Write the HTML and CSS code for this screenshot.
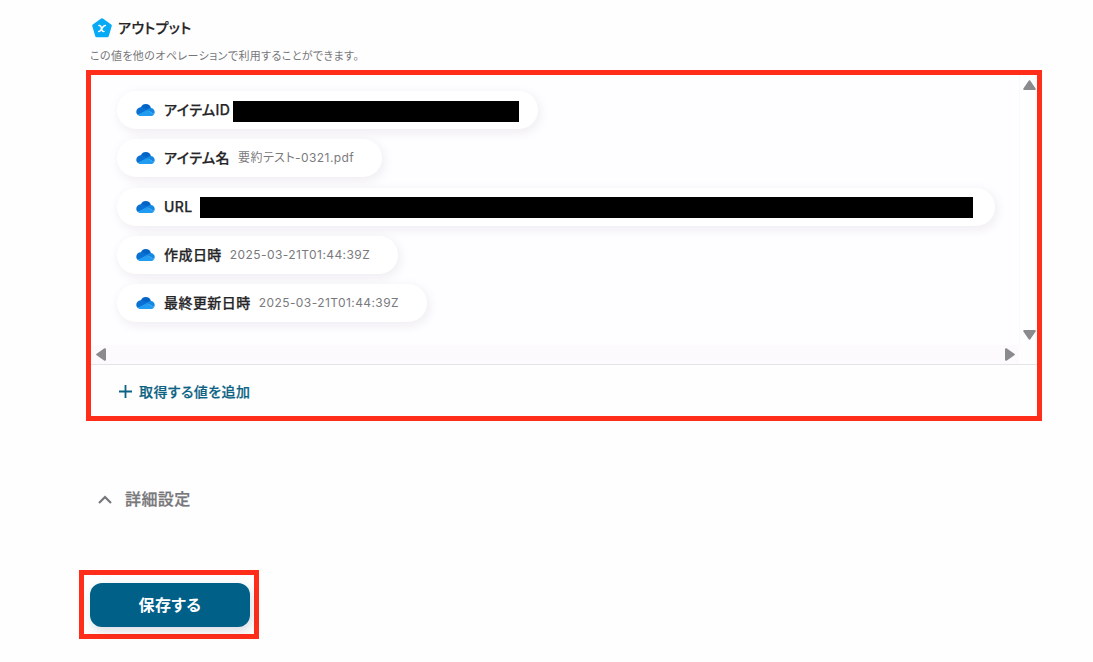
FILE: index.html
```html
<!DOCTYPE html>
<html lang="ja">
<head>
<meta charset="utf-8">
<title>アウトプット</title>
<link rel="stylesheet" href="styles.css">
</head>
<body>
<svg width="0" height="0" class="defs">
  <symbol id="cloud" viewBox="0 0 20 14">
    <path fill="#0364c8" d="M5 4.600C6 1.800 8 .7 10.200 .7c2.900 0 4.900 1.700 5.500 4.200L11 8.500 4 6z"/>
    <path fill="#0a70d4" d="M4.800 4.200c2-.3 3.600.5 5.300 1.600l3 2L2 12.200C.8 11.300.3 10.200.3 8.900c0-2.600 2-4.500 4.500-4.700z"/>
    <path fill="#1488e0" d="M11 7c1.200-1.200 2.700-2.300 4.500-2.200 2.400.1 4.200 2 4.200 4.300 0 .8-.2 1.500-.5 2z"/>
    <path fill="#229cf0" d="M1.700 11.900 11.500 7l7.800 4.100c-.7 1.300-2 2.200-3.600 2.200H4.900c-1.300 0-2.400-.5-3.200-1.400z"/>
  </symbol>
</svg>

<div class="page">
  <div class="head">
    <svg class="head-icon" width="20" height="20" viewBox="0 0 20 20">
      <path fill="#06aaf5" stroke="#06aaf5" stroke-width="3" stroke-linejoin="round" d="M10 1.700 18.300 7.600 15.300 17.800H4.700L1.700 7.600z"/>
      <path fill="none" stroke="#fff" stroke-width="1.500" stroke-linecap="round" stroke-linejoin="round" d="M7 7.500c1.200-.2 1.700.2 2 1.200l1 3.600c.3 1 .9 1.400 2 1.100M13.400 7.500c-1-.1-1.600.3-2.300 1.300l-2.300 3.400c-.6.900-1.200 1.300-2.200 1.200"/>
    </svg>
    <h2>アウトプット</h2>
  </div>
  <p class="note">この値を他のオペレーションで利用することができます。</p>

  <div class="panel">
    <div class="scroll">
      <div class="list">
        <div class="chip chip-id">
          <svg class="cloud"><use href="#cloud"/></svg>
          <span class="name">アイテムID</span>
          <span class="mask"></span>
        </div>
        <div class="chip">
          <svg class="cloud"><use href="#cloud"/></svg>
          <span class="name">アイテム名</span>
          <span class="value">要約テスト-0321.pdf</span>
        </div>
        <div class="chip chip-url">
          <svg class="cloud"><use href="#cloud"/></svg>
          <span class="name">URL</span>
          <span class="mask"></span>
        </div>
        <div class="chip">
          <svg class="cloud"><use href="#cloud"/></svg>
          <span class="name">作成日時</span>
          <span class="value">2025-03-21T01:44:39Z</span>
        </div>
        <div class="chip">
          <svg class="cloud"><use href="#cloud"/></svg>
          <span class="name">最終更新日時</span>
          <span class="value">2025-03-21T01:44:39Z</span>
        </div>
      </div>
      <div class="bar-y">
        <svg width="13" height="10" viewBox="0 0 13 10"><path d="M6.500 1.200 11.800 9H1.200z"/></svg>
        <svg width="13" height="10" viewBox="0 0 13 10"><path d="M6.500 8.800 11.800 1H1.200z"/></svg>
      </div>
      <div class="bar-x">
        <svg width="10" height="13" viewBox="0 0 10 13"><path d="M1.200 6.500 9 1.200v10.600z"/></svg>
        <svg width="10" height="13" viewBox="0 0 10 13"><path d="M8.800 6.500 1 1.200v10.600z"/></svg>
      </div>
    </div>
    <div class="add">
      <svg width="13" height="13" viewBox="0 0 13 13"><path d="M6.500 0v13M0 6.500h13"/></svg>
      <span>取得する値を追加</span>
    </div>
  </div>

  <div class="detail">
    <svg width="14" height="9" viewBox="0 0 14 9"><path d="M1 8 7 2l6 6"/></svg>
    <span>詳細設定</span>
  </div>

  <div class="save-frame">
    <button class="save" type="button">保存する</button>
  </div>
</div>
</body>
</html>
```
FILE: styles.css
```css
* {
    box-sizing: border-box;
    margin: 0;
    padding: 0;
}

body {
    width: 1093px;
    height: 662px;
    overflow: hidden;
    background: #fefefe;
    color: #252528;
    font-family: Inter, "Noto Sans CJK JP", sans-serif;
    font-feature-settings: "palt";
}

svg {
    display: block;
    flex: none;
}

.defs {
    display: none;
}

.page {
    padding: 18px 51px 0 79px;
}

.head {
    display: flex;
    align-items: center;
    height: 20px;
    padding-left: 13px;
}

.head h2 {
    margin-left: 6px;
    font-size: 14px;
    line-height: 20px;
    font-weight: 500;
    letter-spacing: 0.4px;
    -webkit-text-stroke: 0.25px;
}

.note {
    height: 16px;
    margin: 10px 0 6px 11px;
    font-size: 11px;
    line-height: 16px;
    letter-spacing: 0.4px;
    color: #77777a;
    white-space: nowrap;
}

.panel {
    width: 956px;
    height: 351px;
    margin-left: 7px;
    border: 5px solid #ff2d1a;
}

.scroll {
    display: grid;
    grid-template-columns: 1fr 18px;
    grid-template-rows: 270px 19px;
    height: 290px;
    border-bottom: 1px solid #e4e3e7;
}

.list {
    display: flex;
    flex-direction: column;
    align-items: flex-start;
    gap: 10.3px;
    padding: 16.2px 0 0 26px;
    overflow: hidden;
    background: #fefdff;
}

.chip {
    display: flex;
    align-items: center;
    height: 38px;
    padding: 0 28px 0 19px;
    border-radius: 19px;
    background: #fff;
    box-shadow: 2px 3px 12px rgba(40, 30, 60, 0.08);
    white-space: nowrap;
}

.cloud {
    width: 19px;
    height: 14px;
}

.name {
    margin-left: 9px;
    font-size: 14px;
    line-height: 20px;
    font-weight: 500;
    letter-spacing: 0.45px;
    -webkit-text-stroke: 0.25px;
}

.value {
    margin-left: 8px;
    font-size: 12px;
    line-height: 20px;
    letter-spacing: 0.42px;
    color: #7a7a7d;
}

.mask {
    height: 21px;
    margin-top: 2px;
    margin-left: auto;
    background: #000;
}

.chip-id {
    width: 421px;
    padding-right: 19px;
}

.chip-id .mask {
    width: 286px;
}

.chip-url {
    width: 878px;
    padding-right: 22px;
}

.chip-url .mask {
    width: 773px;
}

.bar-y {
    display: flex;
    flex-direction: column;
    align-items: center;
    justify-content: space-between;
    padding: 5px 0 5px 1px;
    border-left: 1px solid #faf8fb;
}

.bar-x {
    display: flex;
    align-items: center;
    justify-content: space-between;
    padding: 0 4px 0 5px;
    background: #fcfafd;
}

.bar-y path, .bar-x path {
    fill: #8b8a8d;
    stroke: #8b8a8d;
    stroke-width: 2;
    stroke-linejoin: round;
}

.add {
    display: flex;
    align-items: center;
    height: 51px;
    padding: 2px 0 0 28px;
    color: #0b6283;
    font-size: 14px;
    line-height: 20px;
    font-weight: 500;
    letter-spacing: 0.4px;
    -webkit-text-stroke: 0.2px;
}

.add svg {
    margin-right: 7px;
}

.add path {
    stroke: #0b6283;
    stroke-width: 1.8;
}

.detail {
    display: flex;
    align-items: center;
    height: 24px;
    margin: 66px 0 59px 19px;
    color: #77777a;
    font-size: 16px;
    line-height: 24px;
    font-weight: 500;
    letter-spacing: 0.4px;
    -webkit-text-stroke: 0.25px;
}

.detail svg {
    margin-right: 13px;
}

.detail path {
    fill: none;
    stroke: #77777a;
    stroke-width: 2.2;
}

.save-frame {
    width: 180px;
    height: 69px;
    padding: 8px 5px 0 6px;
    border: 5px solid #ff2d1a;
}

.save {
    display: block;
    width: 160px;
    height: 44px;
    padding-bottom: 2px;
    border: none;
    border-radius: 12px;
    background: #006087;
    box-shadow: 2px 4px 10px rgba(30, 50, 90, 0.16);
    color: #fff;
    font-family: inherit;
    font-feature-settings: inherit;
    font-size: 16px;
    font-weight: 700;
    letter-spacing: 0.5px;
}
```
